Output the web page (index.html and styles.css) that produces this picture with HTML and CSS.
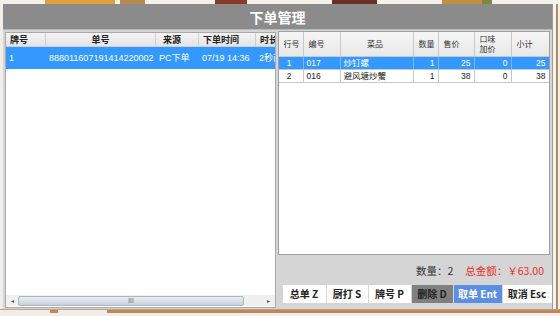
FILE: index.html
```html
<!DOCTYPE html>
<html>
<head>
<meta charset="utf-8">
<link rel="stylesheet" href="styles.css">
</head>
<body>
<div class="screen">
  <div class="topstrip">
    <span class="food f1"></span><span class="food f2"></span><span class="food f3"></span><span class="food f4"></span><span class="food f5"></span><span class="food f6"></span>
  </div>
  <div class="middle">
    <div class="window">
      <div class="titlebar">下单管理</div>
      <div class="content">
        <div class="left">
          <div class="lt">
            <div class="lrow lhead">
              <div class="lc c1">牌号</div>
              <div class="lc c2 center">单号</div>
              <div class="lc c3">来源</div>
              <div class="lc c4">下单时间</div>
              <div class="lc c5">时长</div>
            </div>
            <div class="lrow lsel">
              <div class="lc c1">1</div>
              <div class="lc c2">888011607191414220002</div>
              <div class="lc c3">PC下单</div>
              <div class="lc c4">07/19 14:36</div>
              <div class="lc c5">2秒前</div>
            </div>
          </div>
          <div class="hscroll">
            <div class="arrow">&#9666;</div>
            <div class="thumb"><span class="grip">III</span></div>
            <div class="arrow">&#9656;</div>
          </div>
        </div>
        <div class="right">
          <div class="grid">
            <div class="rrow rhead">
              <div class="rc">行号</div>
              <div class="rc">编号</div>
              <div class="rc center">菜品</div>
              <div class="rc">数量</div>
              <div class="rc">售价</div>
              <div class="rc two"><span>口味</span><span>加价</span></div>
              <div class="rc">小计</div>
            </div>
            <div class="rrow rsel">
              <div class="rc center">1</div>
              <div class="rc">017</div>
              <div class="rc">炒钉螺</div>
              <div class="rc num">1</div>
              <div class="rc num">25</div>
              <div class="rc num">0</div>
              <div class="rc num">25</div>
            </div>
            <div class="rrow">
              <div class="rc center">2</div>
              <div class="rc">016</div>
              <div class="rc">避风塘炒蟹</div>
              <div class="rc num">1</div>
              <div class="rc num">38</div>
              <div class="rc num">0</div>
              <div class="rc num">38</div>
            </div>
          </div>
          <div class="summary">
            <span class="qty">数量：2</span>
            <span class="total">总金额：￥63.00</span>
          </div>
          <div class="buttons">
            <div class="btn">总单 Z</div>
            <div class="btn">厨打 S</div>
            <div class="btn">牌号 P</div>
            <div class="btn del">删除 D</div>
            <div class="btn take">取单 Ent</div>
            <div class="btn">取消 Esc</div>
          </div>
        </div>
      </div>
    </div>
    <div class="sideedge"></div>
  </div>
  <div class="bottomstrip">
    <span class="wood w1"></span><span class="wood w2"></span>
  </div>
</div>
</body>
</html>
```

FILE: styles.css
```css
* { box-sizing: border-box; }
html, body { margin: 0; padding: 0; }
body {
  width: 560px;
  height: 316px;
  overflow: hidden;
  background: #f2ede6;
  font-family: "Noto Sans CJK SC", "Noto Sans", sans-serif;
  color: #222;
}
.screen { width: 560px; height: 316px; display: flex; flex-direction: column; }
.topstrip {
  height: 4px;
  display: flex;
  background: #f4f0ea;
}
.food { height: 4px; display: block; }
.f1 { margin-left: 45px; width: 70px; background: #e0a040; }
.f2 { margin-left: 5px; width: 25px; background: #b88a50; }
.f3 { margin-left: 70px; width: 32px; background: #8a3a28; }
.f4 { margin-left: 85px; width: 45px; background: #6a3028; }
.f5 { margin-left: 65px; width: 40px; background: #c09040; }
.f6 { margin-left: 0; width: 10px; background: #7a8a40; }

.middle { display: flex; height: 305px; }
.window {
  margin-left: 3px;
  width: 550px;
  height: 305px;
  background: #d5d5d5;
  border-right: 1px solid #9a9a9a;
  display: flex;
  flex-direction: column;
}
.titlebar {
  height: 26px;
  background: #8b8b8b;
  color: #fff;
  font-weight: bold;
  font-size: 14px;
  line-height: 26px;
  text-align: center;
  border-bottom: 1px solid #b8b8b8;
}
.content {
  display: flex;
  padding: 1px 0 0 2px;
  flex: 1;
}
.left {
  width: 271px;
  height: 276px;
  margin-top: 1px;
  background: #fff;
  border: 1px solid #a9a9a9;
  display: flex;
  flex-direction: column;
  overflow: hidden;
}
.lt { flex: 1; overflow: hidden; }
.lrow { display: flex; white-space: nowrap; }
.lhead {
  height: 14px;
  background: linear-gradient(#f4f4f4, #e4e4e4);
  border-bottom: 1px solid #d0d0d0;
  font-weight: bold;
  font-size: 9px;
  line-height: 13px;
  color: #222;
}
.lhead .lc { border-right: 1px solid #cfcfcf; padding-left: 4px; }
.lsel {
  height: 22px;
  background: #3399ff;
  color: #fff;
  font-family: "Liberation Sans", "Noto Sans CJK SC", sans-serif;
  font-size: 9px;
  line-height: 22px;
}
.lsel .lc { padding-left: 3px; }
.lc { overflow: hidden; flex: none; }
.c1 { width: 40px; }
.c2 { width: 110px; }
.c3 { width: 43px; }
.c4 { width: 57px; }
.c5 { width: 24px; }
.lhead .c3 { padding-left: 7px; }
.lhead .c4 { padding-left: 4px; }
.center { text-align: center; padding-left: 0 !important; }

.hscroll {
  height: 11px;
  margin: 0 0 1px 0;
  display: flex;
  align-items: center;
  background: #f0f0f0;
}
.arrow {
  width: 12px;
  font-size: 6px;
  color: #555;
  text-align: center;
  line-height: 11px;
}
.thumb {
  width: 226px;
  height: 10px;
  border: 1px solid #a8b6c4;
  border-radius: 2px;
  background: linear-gradient(#e8eef4, #c8d2dc);
  text-align: center;
  line-height: 8px;
  font-size: 6px;
  color: #555;
}
.thumb + .arrow { margin-left: auto; }

.right {
  margin-left: 2px;
  width: 275px;
  display: flex;
  flex-direction: column;
}
.grid {
  width: 272px;
  height: 224px;
  background: #fff;
  border: 1px solid #a0a0a0;
}
.rrow {
  display: grid;
  grid-template-columns: 25px 37px 73px 25px 36px 37px 37px;
  height: 13px;
  font-family: "Liberation Sans", "Noto Sans CJK SC", sans-serif;
  font-size: 8.5px;
  line-height: 12px;
  border-bottom: 1px solid #c8c8c8;
}
.rrow .rc { border-right: 1px solid #c8c8c8; padding: 0 3px; white-space: nowrap; overflow: hidden; }
.rrow .rc:last-child { border-right: none; }
.rhead {
  height: 25px;
  background: linear-gradient(#f6f6f6, #e8e8e8);
  font-family: "Noto Sans CJK SC", sans-serif;
  font-size: 8px;
  line-height: 24px;
  color: #333;
}
.rhead .rc { padding-left: 5px; }
.rhead .two {
  display: flex;
  flex-direction: column;
  justify-content: center;
  line-height: 10px;
  padding-bottom: 1px;
}
.rsel { background: #3399ff; color: #fff; }
.rsel .rc { border-right-color: #7ab8f5; }
.num { text-align: right; }

.summary {
  height: 30px;
  display: flex;
  justify-content: flex-end;
  align-items: center;
  padding-right: 8px;
  font-size: 10.5px;
  gap: 12px;
  color: #333;
}
.total { color: #e8302a; }
.buttons {
  display: flex;
  padding-left: 5px;
  gap: 1px;
}
.btn {
  height: 18px;
  background: #fff;
  font-size: 10px;
  font-weight: bold;
  line-height: 18px;
  text-align: center;
  color: #222;
  width: 43px;
  white-space: nowrap;
}
.btn:nth-child(2) { width: 41px; }
.btn:nth-child(3) { width: 42px; }
.btn.del { background: #808080; color: #222; width: 41px; }
.btn.take { background: #5b8fe3; color: #fff; width: 48px; }
.btn:last-child { width: 49px; }

.sideedge {
  width: 6px;
  height: 305px;
  background: linear-gradient(90deg, #f6f2ec 0, #f6f2ec 3px, #b08a60 3px, #b08a60 5px, #f6f2ec 5px);
}
.bottomstrip {
  height: 7px;
  display: flex;
  background: #f2ede6;
  border-top: 1px solid #c0a080;
}
.wood { display: block; height: 3px; background: #c08858; }
.w1 { margin-left: 50px; width: 8px; }
.w2 { margin-left: 49px; width: 460px; }
```
